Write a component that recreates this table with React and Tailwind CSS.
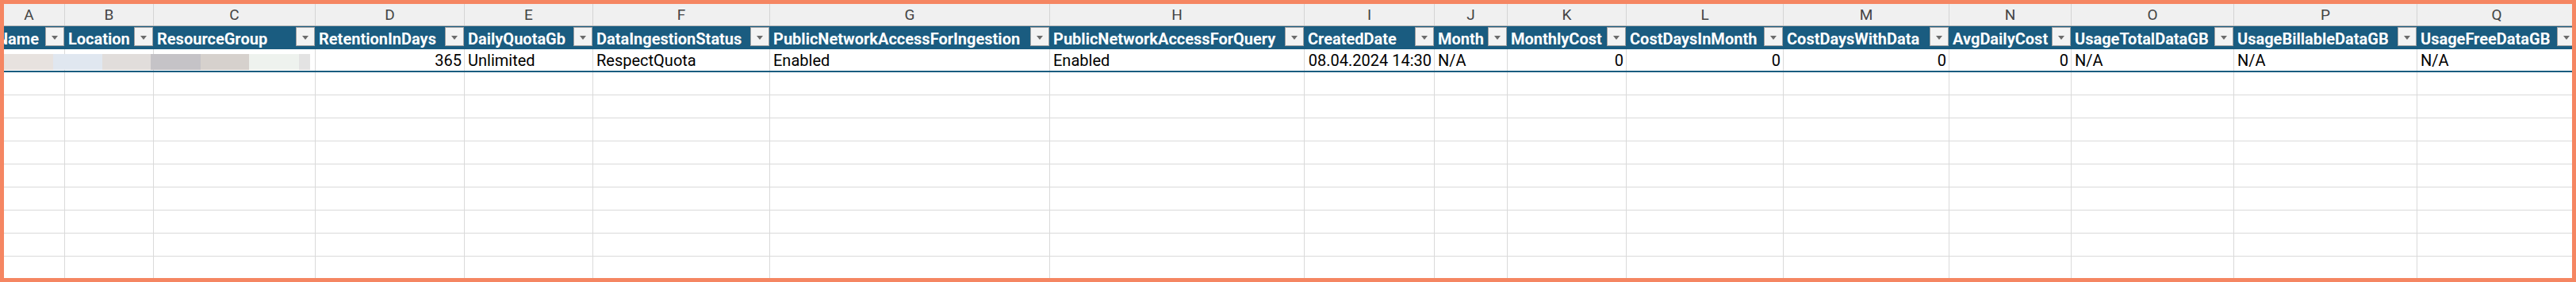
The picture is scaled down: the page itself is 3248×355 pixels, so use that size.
import React from 'react';

const columns = [
  { letter: 'A', width: 'w-[90px]', title: 'Name', value: '', align: 'left' },
  { letter: 'B', width: 'w-[112px]', title: 'Location', value: '', align: 'left' },
  { letter: 'C', width: 'w-[204px]', title: 'ResourceGroup', value: '', align: 'left' },
  { letter: 'D', width: 'w-[188px]', title: 'RetentionInDays', value: '365', align: 'right' },
  { letter: 'E', width: 'w-[162px]', title: 'DailyQuotaGb', value: 'Unlimited', align: 'left' },
  { letter: 'F', width: 'w-[223px]', title: 'DataIngestionStatus', value: 'RespectQuota', align: 'left' },
  { letter: 'G', width: 'w-[353px]', title: 'PublicNetworkAccessForIngestion', value: 'Enabled', align: 'left' },
  { letter: 'H', width: 'w-[321px]', title: 'PublicNetworkAccessForQuery', value: 'Enabled', align: 'left' },
  { letter: 'I', width: 'w-[164px]', title: 'CreatedDate', value: '08.04.2024 14:30', align: 'right' },
  { letter: 'J', width: 'w-[92px]', title: 'Month', value: 'N/A', align: 'left' },
  { letter: 'K', width: 'w-[150px]', title: 'MonthlyCost', value: '0', align: 'right' },
  { letter: 'L', width: 'w-[198px]', title: 'CostDaysInMonth', value: '0', align: 'right' },
  { letter: 'M', width: 'w-[209px]', title: 'CostDaysWithData', value: '0', align: 'right' },
  { letter: 'N', width: 'w-[154px]', title: 'AvgDailyCost', value: '0', align: 'right' },
  { letter: 'O', width: 'w-[205px]', title: 'UsageTotalDataGB', value: 'N/A', align: 'left' },
  { letter: 'P', width: 'w-[231px]', title: 'UsageBillableDataGB', value: 'N/A', align: 'left' },
  { letter: 'Q', width: 'w-[201px]', title: 'UsageFreeDataGB', value: 'N/A', align: 'left' },
];

// pixelated cells that hide the workspace name / location / resource group
const blurBlocks = [
  { width: 'w-[62px]', color: 'bg-[#e7e2df]' },
  { width: 'w-[62px]', color: 'bg-[#e0e7f0]' },
  { width: 'w-[61px]', color: 'bg-[#e1dddb]' },
  { width: 'w-[63px]', color: 'bg-[#c5c3c7]' },
  { width: 'w-[61px]', color: 'bg-[#d6d1cd]' },
  { width: 'w-[63px]', color: 'bg-[#eef2ee]' },
  { width: 'w-[14px]', color: 'bg-[#e3e3e3]' },
];

const FilterButton = () => (
  <div className="shrink-0 self-start mt-[1px] mr-[1px] w-[24px] h-[24px] border border-[#a3a3a3] bg-[#f3f3f3] flex items-center justify-center">
    <div className="mt-[2px] w-0 h-0 border-l-[4px] border-r-[4px] border-t-[5px] border-l-transparent border-r-transparent border-t-[#6b6b6b]" />
  </div>
);

const App = () => {
  const emptyRows = Array.from({ length: 10 }, (_, i) => i);

  return (
    <div className="relative w-[3248px] h-[355px] border-[5px] border-[#f58662] bg-white overflow-hidden font-['Roboto',sans-serif]">
      <div className="ml-[-13px] w-max">
        {/* column letters */}
        <div className="flex h-[28px] bg-[#f0f0f0] border-b border-[#b8b8b8]">
          {columns.map((col) => (
            <div
              key={col.letter}
              className={`${col.width} shrink-0 border-r border-[#d4d4d4] flex items-center justify-center pt-[2px] text-[19px] text-[#444444]`}
            >
              {col.letter}
            </div>
          ))}
        </div>

        {/* table header */}
        <div className="flex h-[29px] bg-[#1a5c80]">
          {columns.map((col) => (
            <div key={col.letter} className={`${col.width} shrink-0 flex items-center`}>
              <span className="flex-1 min-w-0 overflow-hidden whitespace-nowrap pl-[4px] pt-[2px] text-[20px] font-bold text-white">
                {col.title}
              </span>
              <FilterButton />
            </div>
          ))}
        </div>

        {/* data row */}
        <div className="flex h-[29px] border-b-2 border-[#1a5c80]">
          {columns.map((col) => (
            <div
              key={col.letter}
              className={`${col.width} shrink-0 border-r border-[#dadada] flex items-center pt-[1px] pl-[4px] pr-[3px] text-[20px] text-black whitespace-nowrap overflow-hidden ${
                col.align === 'right' ? 'justify-end' : 'justify-start'
              }`}
            >
              {col.value}
            </div>
          ))}
        </div>

        {/* empty grid */}
        {emptyRows.map((r) => (
          <div key={r} className="flex h-[29px] border-b border-[#dadada]">
            {columns.map((col) => (
              <div key={col.letter} className={`${col.width} shrink-0 border-r border-[#dadada]`} />
            ))}
          </div>
        ))}
      </div>

      <div className="absolute top-[63px] left-0 flex h-[20px]">
        {blurBlocks.map((b, i) => (
          <div key={i} className={`${b.width} ${b.color} h-full`} />
        ))}
      </div>
    </div>
  );
};

export default App;
